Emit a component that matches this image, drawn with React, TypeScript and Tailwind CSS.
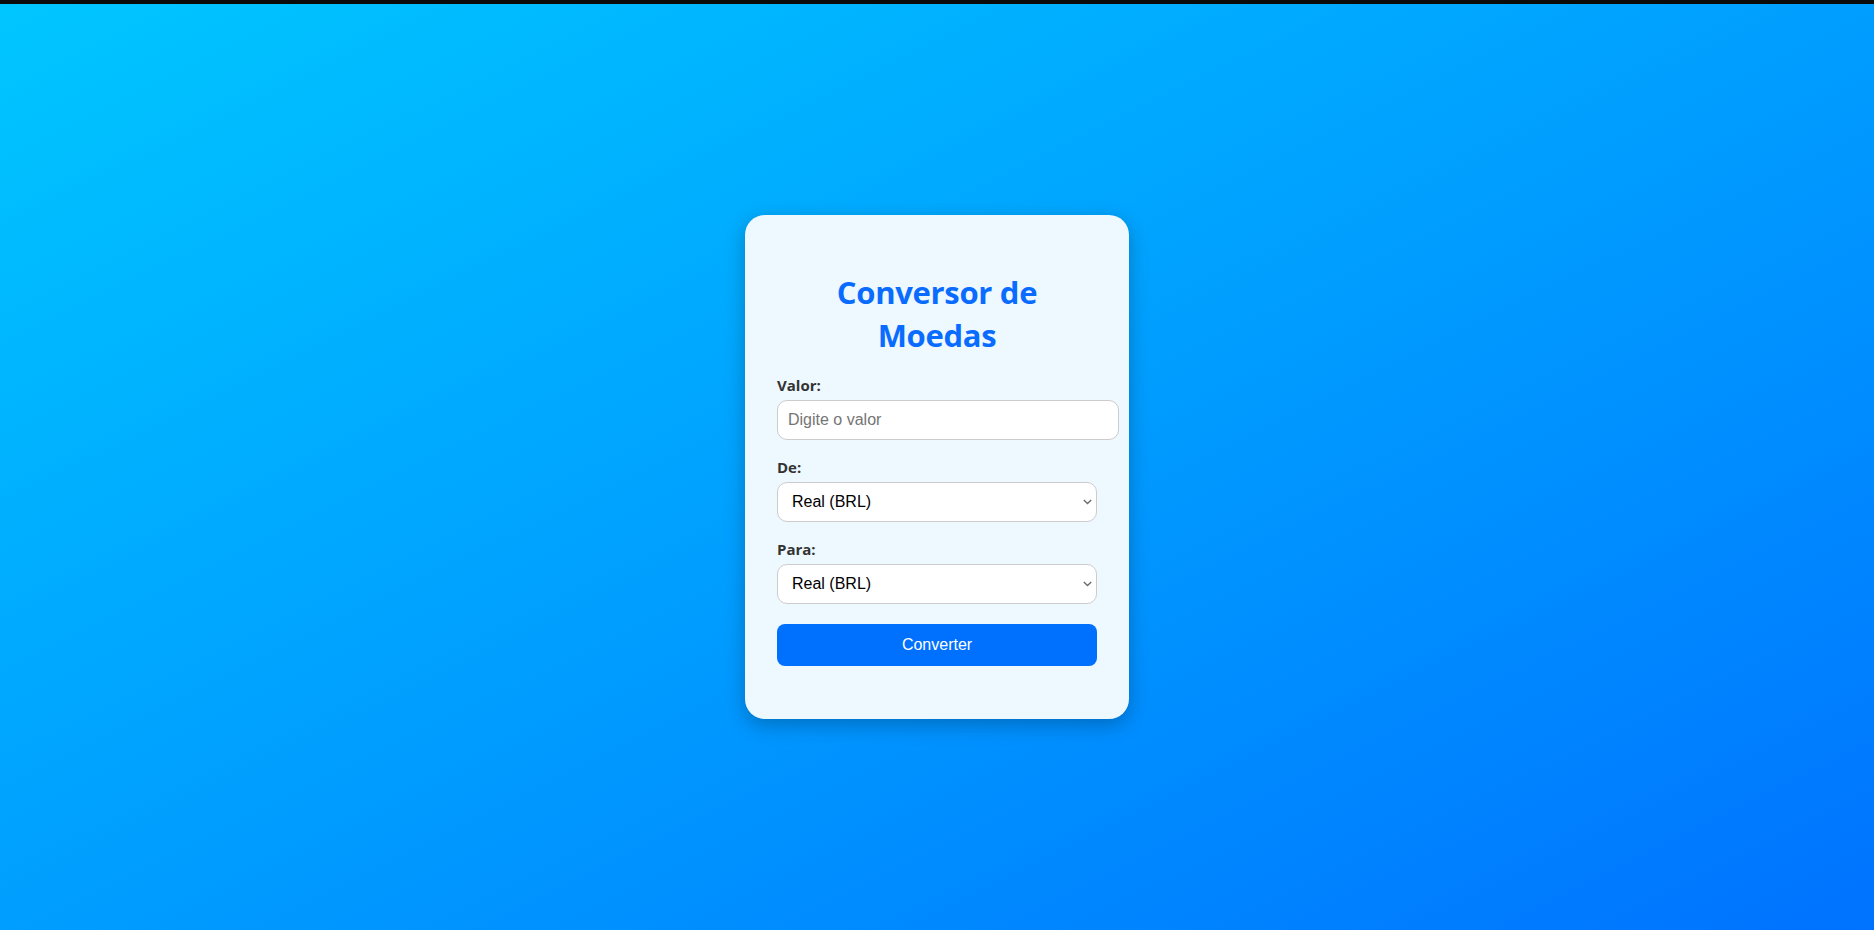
import React from "react";

function Chevron() {
  return (
    <svg
      className="pointer-events-none absolute right-[5px] top-1/2 -translate-y-1/2"
      width="9"
      height="6"
      viewBox="0 0 9 6"
      fill="none"
    >
      <path d="M0.8 1 L4.5 4.6 L8.2 1" stroke="#6b6b6b" strokeWidth="1.4" />
    </svg>
  );
}

function Select() {
  return (
    <div className="relative w-[320px]">
      <select className="h-[40px] w-[320px] appearance-none rounded-[10px] border border-[#cccccc] bg-white pl-[14px] pr-[20px] text-[16px] text-black outline-none [font-family:'Liberation_Sans',Arial,sans-serif]">
        <option>Real (BRL)</option>
        <option>Dólar (USD)</option>
        <option>Euro (EUR)</option>
      </select>
      <Chevron />
    </div>
  );
}

export default function App() {
  return (
    <div className="flex h-[930px] w-full flex-col overflow-hidden">
      <div className="h-[4px] w-full bg-[#0b0b0b]" />
      <div className="flex flex-1 items-center justify-center bg-gradient-to-br from-[#00c6ff] to-[#0072ff]">
        <div className="box-border flex w-[384px] flex-col rounded-[20px] bg-[#eef8ff] px-[32px] pb-[53px] pt-[56px] shadow-[0_6px_20px_rgba(0,0,0,0.25)]">
          <h1 className="mx-auto w-[240px] text-center text-[31px] font-bold leading-[43px] tracking-[-0.3px] text-[#0a6cff] [font-family:'Open_Sans',sans-serif]">
            Conversor de Moedas
          </h1>
          <label className="mt-[18px] mb-[5px] block text-[15px] font-bold leading-[20px] text-[#333] [font-family:'Open_Sans',sans-serif]">
            Valor:
          </label>
          <input
            type="number"
            placeholder="Digite o valor"
            className="box-content h-[18px] w-[320px] rounded-[10px] border border-[#cccccc] bg-white px-[10px] py-[10px] text-[16px] text-black outline-none placeholder:text-[#757575] [font-family:'Liberation_Sans',Arial,sans-serif]"
          />
          <label className="mt-[17px] mb-[5px] block text-[15px] font-bold leading-[20px] text-[#333] [font-family:'Open_Sans',sans-serif]">
            De:
          </label>
          <Select />
          <label className="mt-[17px] mb-[5px] block text-[15px] font-bold leading-[20px] text-[#333] [font-family:'Open_Sans',sans-serif]">
            Para:
          </label>
          <Select />
          <button className="mt-[20px] h-[42px] w-[320px] rounded-[8px] bg-[#0070ff] text-[16px] text-white [font-family:'Liberation_Sans',Arial,sans-serif]">
            Converter
          </button>
        </div>
      </div>
    </div>
  );
}
